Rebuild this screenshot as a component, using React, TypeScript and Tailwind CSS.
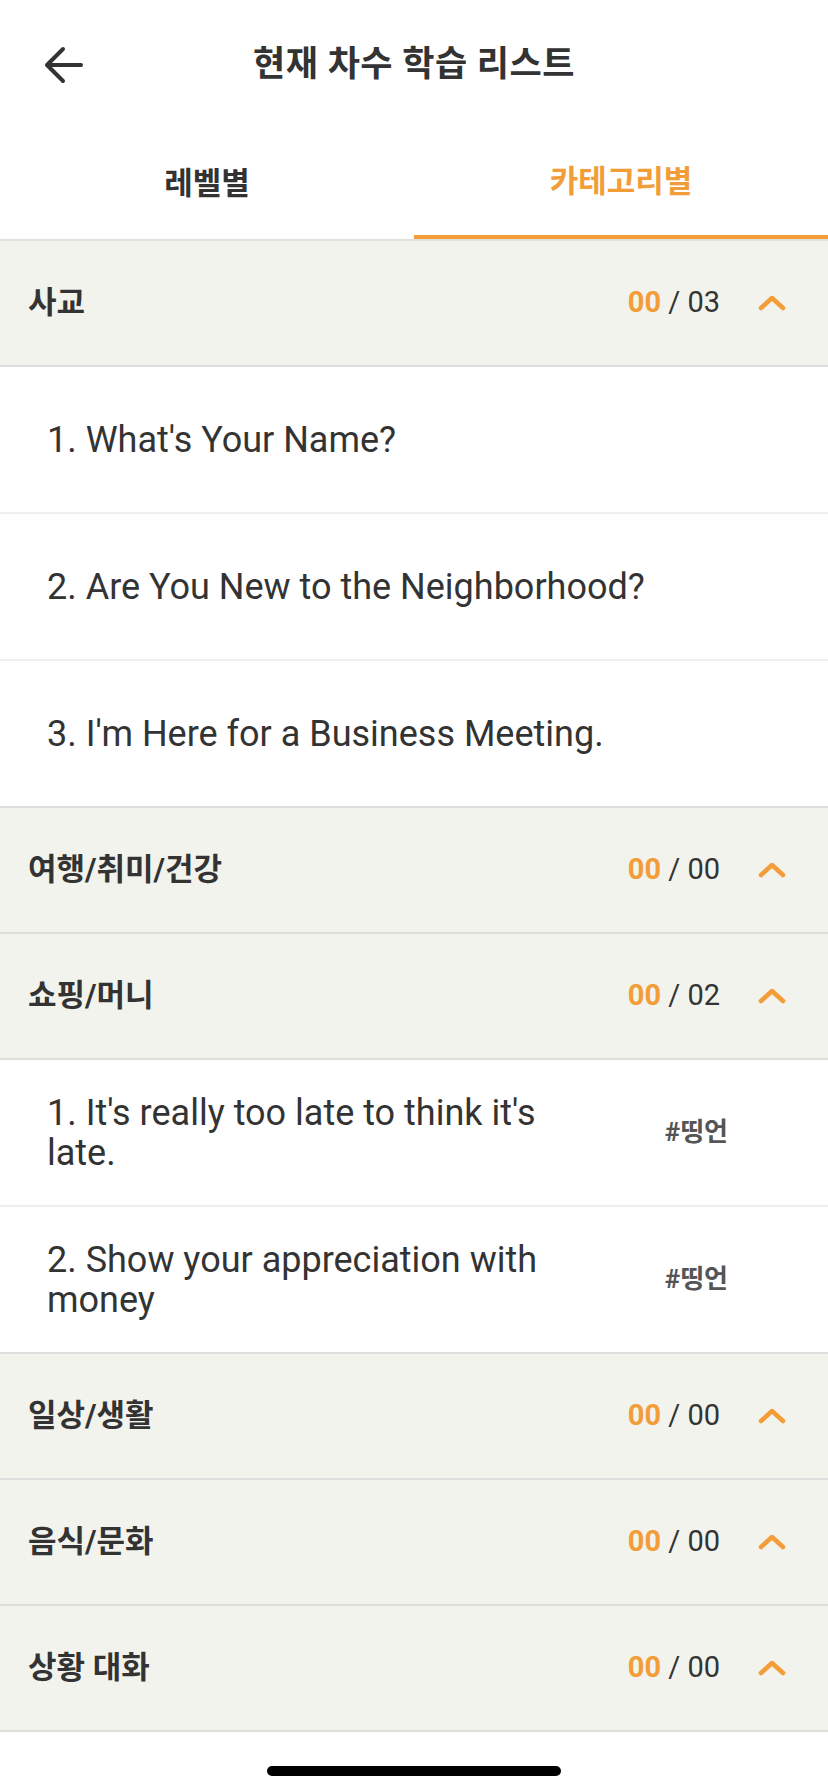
import { Fragment } from "react";

type Lesson = { title: string; tag?: string };
type Category = { name: string; done: string; total: string; lessons: Lesson[] };

const categories: Category[] = [
    {
        name: "사교",
        done: "00",
        total: "03",
        lessons: [
            { title: "1. What's Your Name?" },
            { title: "2. Are You New to the Neighborhood?" },
            { title: "3. I'm Here for a Business Meeting." },
        ],
    },
    { name: "여행/취미/건강", done: "00", total: "00", lessons: [] },
    {
        name: "쇼핑/머니",
        done: "00",
        total: "02",
        lessons: [
            { title: "1. It's really too late to think it's late.", tag: "#띵언" },
            { title: "2. Show your appreciation with money", tag: "#띵언" },
        ],
    },
    { name: "일상/생활", done: "00", total: "00", lessons: [] },
    { name: "음식/문화", done: "00", total: "00", lessons: [] },
    { name: "상황 대화", done: "00", total: "00", lessons: [] },
];

const BackArrow = () => (
    <svg width="40" height="38" viewBox="0 0 40 38" fill="none" stroke="#333333" strokeWidth="4" strokeLinecap="round" strokeLinejoin="round">
        <path d="M37 19H4" />
        <path d="M19 3L3 19L19 35" />
    </svg>
);

const ChevronUp = () => (
    <svg width="28" height="16" viewBox="0 0 28 16" fill="none" stroke="#f29d38" strokeWidth="4.5" strokeLinecap="round" strokeLinejoin="round">
        <path d="M3 13L14 3L25 13" />
    </svg>
);

export default function App() {
    return (
        <div className="w-[828px] min-h-[1792px] bg-white text-[#333333] font-['Roboto','Noto_Sans_CJK_KR',sans-serif]">
            {/* header */}
            <div className="relative h-[127px] flex items-center justify-center pt-[4px]">
                <button className="absolute left-[44px] top-[46px]">
                    <BackArrow />
                </button>
                <h1 className="text-[35px] font-bold tracking-[0.5px]">현재 차수 학습 리스트</h1>
            </div>

            {/* tabs */}
            <div className="flex border-b-2 border-[#e0e0e0]">
                <div className="flex-1 h-[112px] flex items-center justify-center pt-[3px] text-[31px] font-bold text-[#333333]">
                    레벨별
                </div>
                <div className="flex-1 h-[112px] flex items-center justify-center pt-[3px] text-[31px] font-bold text-[#f29d38] border-b-4 border-[#f29d38]">
                    카테고리별
                </div>
            </div>

            {/* categories */}
            {categories.map((cat) => (
                <Fragment key={cat.name}>
                    <div className="h-[126px] flex items-center bg-[#f3f3ee] border-b-2 border-[#dedede] pl-[28px] pr-[42px]">
                        <span className="flex-1 text-[31px] font-bold">{cat.name}</span>
                        <span className="text-[29px]">
                            <span className="font-bold text-[#f29d38]">{cat.done}</span>
                            <span> / {cat.total}</span>
                        </span>
                        <span className="ml-[38px] flex items-center">
                            <ChevronUp />
                        </span>
                    </div>
                    {cat.lessons.map((lesson, index) => (
                        <div
                            key={index}
                            className={`h-[147px] flex items-center pl-[47px] border-b-2 ${
                                index === cat.lessons.length - 1 ? "border-[#dedede]" : "border-[#efefef]"
                            }`}
                        >
                            <p className={`text-[36px] leading-[40px] ${lesson.tag ? "w-[520px]" : "flex-1"}`}>{lesson.title}</p>
                            {lesson.tag && (
                                <span className="ml-auto mr-[100px] text-[26px] font-bold text-[#555555]">{lesson.tag}</span>
                            )}
                        </div>
                    ))}
                </Fragment>
            ))}

            {/* home indicator */}
            <div className="flex justify-center pt-[34px]">
                <div className="w-[294px] h-[10px] rounded-full bg-black" />
            </div>
        </div>
    );
}
